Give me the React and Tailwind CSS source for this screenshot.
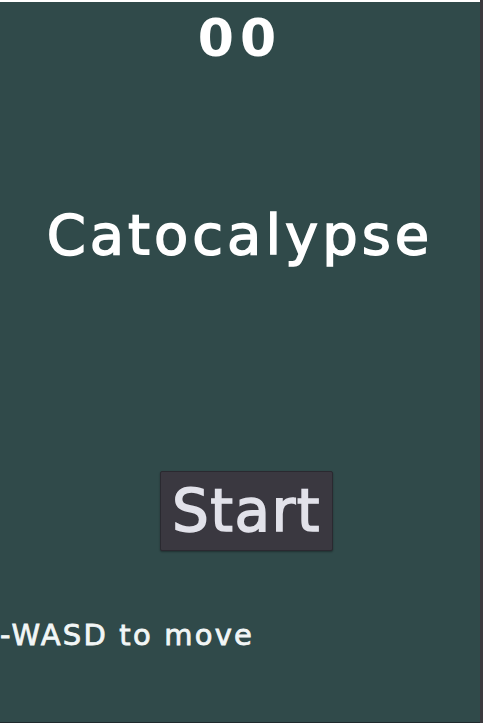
const App = () => {
  const score = '00';

  return (
    <div className="flex h-[723px] w-[483px] overflow-hidden bg-[#3b3a3e]" style={{ fontFamily: '"DejaVu Sans", sans-serif' }}>
      <div className="flex w-[480px] flex-col border-t-2 border-b border-t-white border-b-[#1f2a2d] bg-[#304a4a]">
        <div className="flex justify-center pt-[7px]">
          <span className="text-[52px] font-bold leading-[58px] tracking-[6px] text-white">{score}</span>
        </div>

        <h1 className="mt-[136px] text-center text-[56px] leading-[64px] tracking-[4px] text-white [-webkit-text-stroke:1.5px_#fff]">Catocalypse</h1>

        <div className="mt-[204px] flex justify-center pl-[13px]">
          <button className="h-[80px] w-[173px] rounded-[2px] border border-[#2a2930] bg-[#3a3840] text-[58px] leading-none tracking-[1.5px] text-[#e2e2ea] shadow-[0_1px_2px_rgba(0,0,0,0.35)] [-webkit-text-stroke:1.5px_#e2e2ea]">
            Start
          </button>
        </div>

        <p className="mt-[68px] text-[29px] leading-[32px] tracking-[2.2px] text-[#f2f6f6] [-webkit-text-stroke:0.8px_#f2f6f6]">-WASD to move</p>
      </div>
    </div>
  );
};

export default App;
